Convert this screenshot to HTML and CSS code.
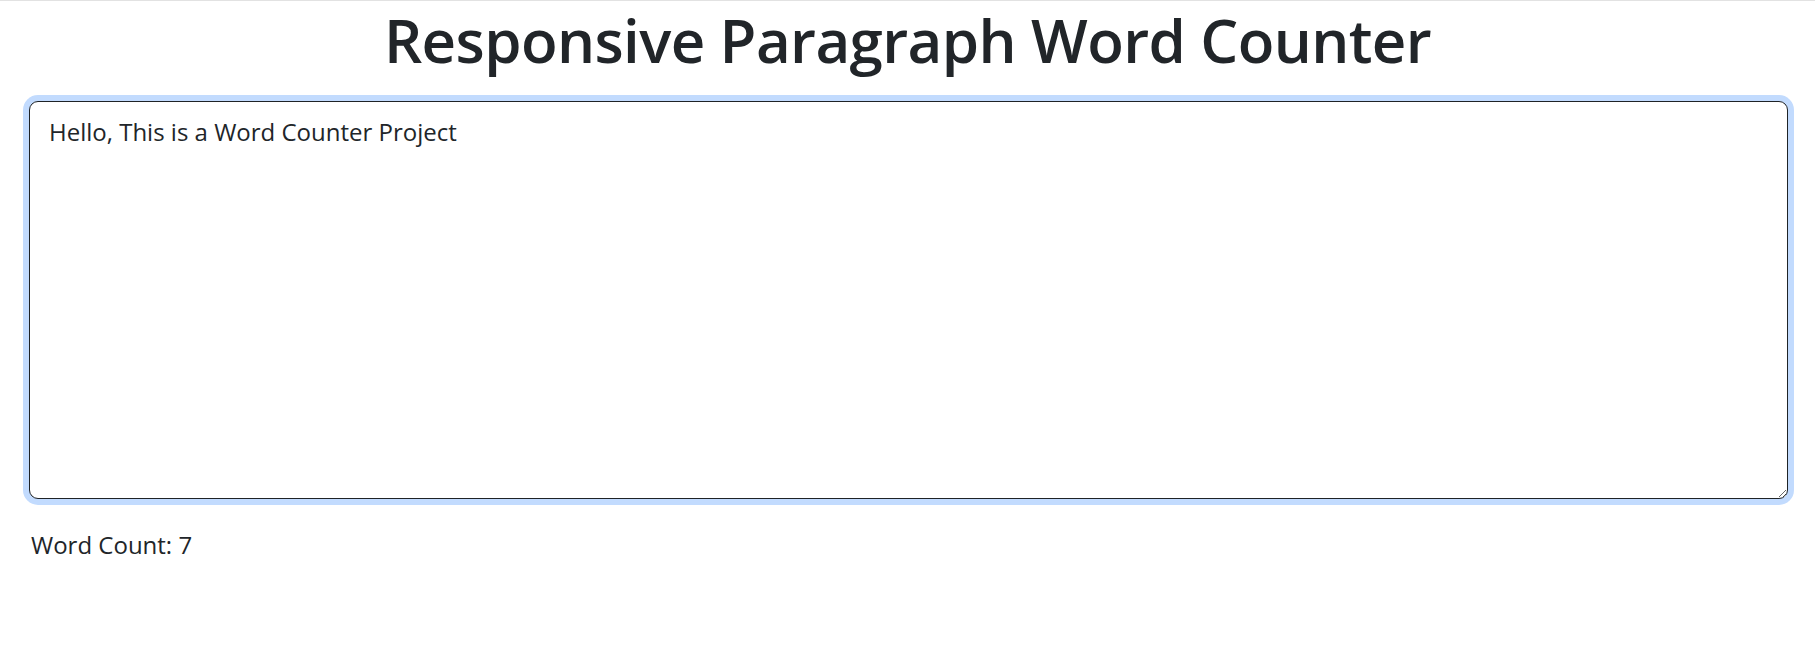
FILE: index.html
```html
<!DOCTYPE html>
<html lang="en">
<head>
<meta charset="utf-8">
<title>Responsive Paragraph Word Counter</title>
<link rel="stylesheet" href="styles.css">
</head>
<body>
<div class="page">
  <h1 class="title">Responsive Paragraph Word Counter</h1>
  <div class="editor">
    <textarea class="input" spellcheck="false">Hello, This is a Word Counter Project</textarea>
    <p class="count">Word Count: 7</p>
  </div>
</div>
</body>
</html>
```
FILE: styles.css
```css
html, body {
  margin: 0;
  padding: 0;
  background: #ffffff;
}
body {
  border-top: 1px solid #e2e2e2;
  font-family: "Open Sans", "Liberation Sans", sans-serif;
  color: #212529;
}
.page {
  display: flex;
  flex-direction: column;
}
.title {
  margin: 3px 0 0 0;
  font-size: 60px;
  font-weight: 600;
  line-height: 72px;
  letter-spacing: -0.6px;
  text-align: center;
  color: #212529;
}
.editor {
  padding: 25px 27px 0 29px;
  display: flex;
  flex-direction: column;
}
.input {
  box-sizing: border-box;
  display: block;
  width: 100%;
  height: 398px;
  margin: 0;
  padding: 12px 18px 8px 19px;
  font-family: "Open Sans", "Liberation Sans", sans-serif;
  font-size: 24px;
  line-height: 36px;
  color: #212529;
  background: #ffffff;
  border: 1.5px solid #1f2326;
  border-radius: 9px;
  box-shadow: 0 0 0 6px #c2dbfe;
  outline: none;
  resize: vertical;
}
.count {
  margin: 28px 0 0 2px;
  font-size: 24px;
  line-height: 36px;
  color: #212529;
}
```
